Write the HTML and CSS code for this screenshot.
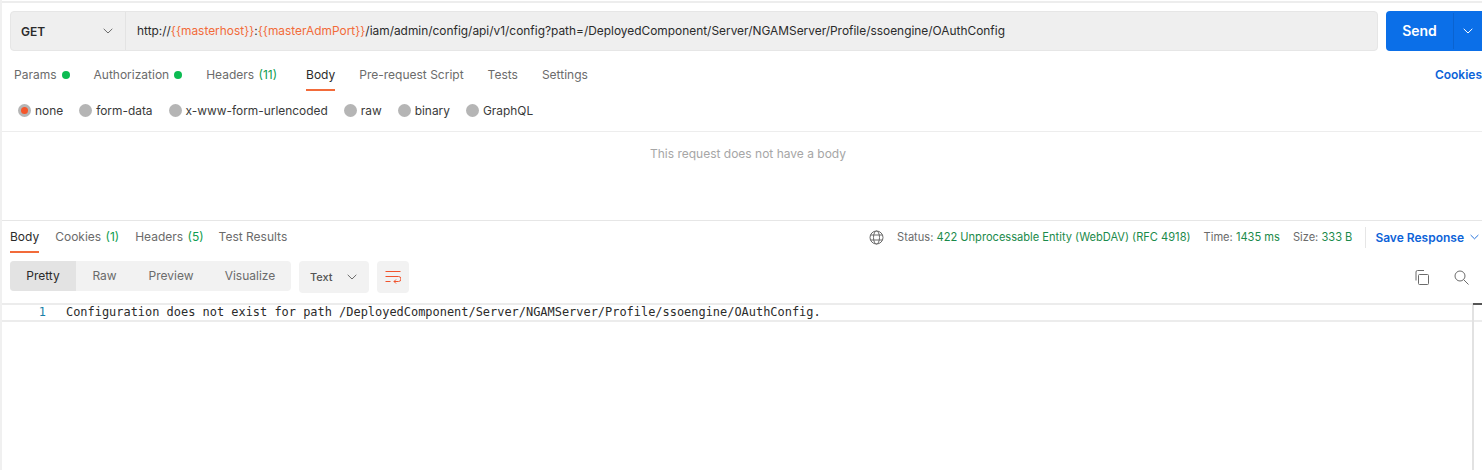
FILE: index.html
```html
<!DOCTYPE html>
<html lang="en">
<head>
<meta charset="utf-8">
<title>Request</title>
<link rel="stylesheet" href="styles.css">
</head>
<body>
<div class="page">
  <section class="request">
    <div class="url-row">
      <div class="url-box">
        <div class="method"><span>GET</span>
          <svg class="chev" width="10" height="6" viewBox="0 0 10 6"><path d="M.7.8 5 5 9.3.8" fill="none" stroke="#6b6b6b"/></svg>
        </div>
        <div class="url">http://<span class="var">{{masterhost}}</span>:<span class="var">{{masterAdmPort}}</span>/iam/admin/config/api/v1/config?path=/DeployedComponent/Server/NGAMServer/Profile/ssoengine/OAuthConfig</div>
      </div>
      <div class="send">
        <span class="send-label">Send</span>
        <span class="send-more"><svg width="10" height="6" viewBox="0 0 10 6"><path d="M.7.8 5 5 9.3.8" fill="none" stroke="#fff"/></svg></span>
      </div>
    </div>
    <div class="req-tabs">
      <span class="tab">Params<i class="dot"></i></span>
      <span class="tab">Authorization<i class="dot"></i></span>
      <span class="tab">Headers <em>(11)</em></span>
      <span class="tab active">Body</span>
      <span class="tab">Pre-request Script</span>
      <span class="tab">Tests</span>
      <span class="tab">Settings</span>
      <span class="cookies">Cookies</span>
    </div>
    <div class="body-types">
      <label class="radio"><i class="circle on"></i>none</label>
      <label class="radio"><i class="circle"></i>form-data</label>
      <label class="radio"><i class="circle"></i>x-www-form-urlencoded</label>
      <label class="radio"><i class="circle"></i>raw</label>
      <label class="radio"><i class="circle"></i>binary</label>
      <label class="radio"><i class="circle"></i>GraphQL</label>
    </div>
    <div class="no-body">This request does not have a body</div>
  </section>
  <section class="response">
    <div class="res-head">
      <div class="res-tabs">
        <span class="rtab active">Body</span>
        <span class="rtab">Cookies <em>(1)</em></span>
        <span class="rtab">Headers <em>(5)</em></span>
        <span class="rtab">Test Results</span>
      </div>
      <div class="meta">
        <svg class="globe" width="15" height="15" viewBox="0 0 15 15" fill="none" stroke="#6b6b6b"><circle cx="7.5" cy="7.5" r="6.5"/><ellipse cx="7.5" cy="7.5" rx="3" ry="6.5"/><path d="M1.6 5h11.8M1.6 10h11.8"/></svg>
        <span class="stat">Status: <b>422 Unprocessable Entity (WebDAV) (RFC 4918)</b></span>
        <span class="stat">Time: <b>1435 ms</b></span>
        <span class="stat">Size: <b>333 B</b></span>
        <span class="save">Save Response<svg width="9" height="6" viewBox="0 0 10 6"><path d="M.7.8 5 5 9.3.8" fill="none" stroke="#0d63d8"/></svg></span>
      </div>
    </div>
    <div class="toolbar">
      <div class="views">
        <span class="view active">Pretty</span>
        <span class="view raw">Raw</span>
        <span class="view preview">Preview</span>
        <span class="view viz">Visualize</span>
      </div>
      <div class="format">Text
        <svg width="10" height="6" viewBox="0 0 10 6"><path d="M.7.8 5 5 9.3.8" fill="none" stroke="#6b6b6b"/></svg>
      </div>
      <div class="wrap">
        <svg width="16" height="14" viewBox="0 0 16 14" fill="none" stroke="#f0532d"><path d="M.5 1.5h15M.5 6.5h13a2.2 2.2 0 0 1 0 5H9"/><path d="M11 9.5 9 11.5l2 2M.5 11.5h5"/></svg>
      </div>
      <div class="tools">
        <svg width="14" height="15" viewBox="0 0 14 15" fill="none" stroke="#6b6b6b"><rect x="3.5" y="4.5" width="10" height="10" rx="1"/><path d="M1 10.5V2a1.5 1.5 0 0 1 1.5-1.5H9"/></svg>
        <svg width="15" height="15" viewBox="0 0 15 15" fill="none" stroke="#6b6b6b"><circle cx="6" cy="6" r="5"/><path d="m9.6 9.6 4.9 4.9"/></svg>
      </div>
    </div>
    <div class="code">
      <span class="line-no">1</span>
      <div class="code-line">Configuration does not exist for path /DeployedComponent/Server/NGAMServer/Profile/ssoengine/OAuthConfig.</div>
    </div>
  </section>
</div>
</body>
</html>
```

FILE: styles.css
```css
html, body {
  margin: 0;
  padding: 0;
  background: #fff;
}
.page {
  width: 1482px;
  height: 470px;
  box-sizing: border-box;
  overflow: hidden;
  border-left: 2px solid #f0f0f0;
  font-family: Inter, "Liberation Sans", sans-serif;
  font-size: 12px;
  color: #6b6b6b;
}
.request {
  height: 220px;
  box-sizing: border-box;
  border-top: 2px solid #ededed;
  border-bottom: 1px solid #e6e6e6;
  margin-top: 1px;
}
.url-row {
  display: flex;
  height: 40px;
  margin: 8px 0 0 8px;
}
.url-box {
  width: 1368px;
  display: flex;
  background: #efefef;
  border: 1px solid #e6e6e6;
  border-radius: 4px;
  box-sizing: border-box;
}
.method {
  width: 115px;
  box-sizing: border-box;
  padding: 0 12px 0 10px;
  display: flex;
  align-items: center;
  justify-content: space-between;
  font-weight: 600;
  color: #2b2b2b;
  border-right: 1px solid #e3e3e3;
}
.url {
  padding-left: 11px;
  font-size: 11.92px;
  line-height: 37px;
  color: #2b2b2b;
  white-space: nowrap;
}
.var { color: #f26b3a; }
.send {
  margin-left: 8px;
  flex: 1;
  display: flex;
  background: #0b6fe8;
  color: #fff;
  border-radius: 4px 0 0 4px;
  align-items: center;
  font-size: 14px;
  font-weight: 600;
}
.send-label {
  width: 67px;
  text-align: center;
  line-height: 36px;
  border-right: 1px solid #0a63d0;
}
.send-more {
  flex: 1;
  display: flex;
  justify-content: center;
}
.req-tabs {
  display: flex;
  align-items: flex-start;
  height: 40px;
  margin: 0 0 0 12px;
}
.tab {
  padding-top: 16px;
  height: 22px;
  margin-right: 24px;
  color: #6b6b6b;
  display: flex;
  align-items: flex-start;
  white-space: pre;
  line-height: 15px;
}
.tab em {
  font-style: normal;
  color: #0f9d50;
  margin: 0 5px 0 1px;
}
.rtab em {
  font-style: normal;
  color: #0f9d50;
  margin-left: 1px;
}
.tab.active {
  color: #2b2b2b;
  border-bottom: 2px solid #f26b3a;
}
.dot {
  width: 8px;
  height: 8px;
  border-radius: 50%;
  background: #0cbb52;
  margin: 4px 0 0 5px;
}
.cookies {
  margin-left: auto;
  padding-top: 16px;
  line-height: 15px;
  color: #0d63d8;
  font-weight: 600;
}
.body-types {
  display: flex;
  gap: 16px;
  margin: 5px 0 0 16px;
  height: 28px;
  align-items: center;
}
.radio {
  display: flex;
  align-items: center;
  font-size: 11.92px;
  color: #3a3a3a;
}
.circle {
  width: 13px;
  height: 13px;
  border-radius: 50%;
  background: #b5b5b5;
  margin-right: 4px;
  display: flex;
  align-items: center;
  justify-content: center;
}
.circle.on::after {
  content: "";
  width: 7px;
  height: 7px;
  border-radius: 50%;
  background: #f5562a;
}
.no-body {
  border-top: 1px solid #ededed;
  margin-top: 7px;
  padding: 14px 0 0 12px;
  text-align: center;
  color: #a6a6a6;
  line-height: 15px;
}
.res-head {
  display: flex;
  justify-content: space-between;
  height: 32px;
  padding-left: 8px;
}
.res-tabs {
  display: flex;
  gap: 16px;
}
.rtab {
  padding-top: 8px;
  height: 22px;
  line-height: 15px;
  white-space: pre;
}
.rtab:last-child { margin-left: -1px; }
.rtab.active {
  color: #2b2b2b;
  border-bottom: 2px solid #f26b3a;
}
.meta {
  display: flex;
  align-items: center;
  height: 32px;
  font-size: 11.1px;
  color: #6b6b6b;
  white-space: pre;
}
.globe { margin-right: 13px; }
.stat { margin-right: 13px; }
.stat b {
  font-weight: 400;
  color: #1a8a4a;
}
.save {
  display: flex;
  align-items: center;
  gap: 6px;
  border-left: 1px solid #e6e6e6;
  padding-left: 9px;
  line-height: 21px;
  font-size: 12px;
  font-weight: 600;
  color: #0d63d8;
  margin-right: 3px;
}
.toolbar {
  display: flex;
  align-items: flex-start;
  margin: 8px 0 0 8px;
  height: 35px;
}
.views {
  display: flex;
  width: 281px;
  height: 30px;
  background: #f2f2f2;
  border-radius: 4px;
  overflow: hidden;
}
.view {
  line-height: 30px;
  text-align: center;
  color: #6b6b6b;
}
.view.active {
  width: 66px;
  background: #e3e3e3;
  color: #2b2b2b;
}
.view.raw { width: 57px; }
.view.preview { width: 76px; }
.view.viz { width: 82px; }
.format {
  margin-left: 8px;
  width: 70px;
  height: 32px;
  box-sizing: border-box;
  background: #f2f2f2;
  border-radius: 4px;
  display: flex;
  align-items: center;
  justify-content: space-between;
  padding: 0 12px 0 11px;
  font-size: 11px;
  font-weight: 500;
  color: #555;
}
.wrap {
  margin-left: 8px;
  width: 32px;
  height: 32px;
  background: #f2f2f2;
  border-radius: 4px;
  display: flex;
  align-items: center;
  justify-content: center;
}
.tools {
  margin-left: auto;
  display: flex;
  gap: 25px;
  padding: 9px 13px 0 0;
}
.code {
  display: flex;
  margin-top: 7px;
  height: 15px;
  border-top: 2px solid #ececec;
  border-bottom: 2px solid #ececec;
  position: relative;
}
.code::before {
  content: "";
  position: absolute;
  right: 8px;
  top: -2px;
  width: 2px;
  height: 170px;
  background: #e2e2e2;
}
.code::after {
  content: "";
  position: absolute;
  right: 0;
  top: -2px;
  width: 9px;
  height: 2px;
  background: #555;
}
.line-no {
  width: 64px;
  padding-right: 20px;
  box-sizing: border-box;
  text-align: right;
  color: #1a7fa8;
  font: 11.95px/15px "DejaVu Sans Mono", monospace;
}
.code-line {
  font: 11.95px/15px "DejaVu Sans Mono", monospace;
  color: #2b2b2b;
  white-space: pre;
}
```
